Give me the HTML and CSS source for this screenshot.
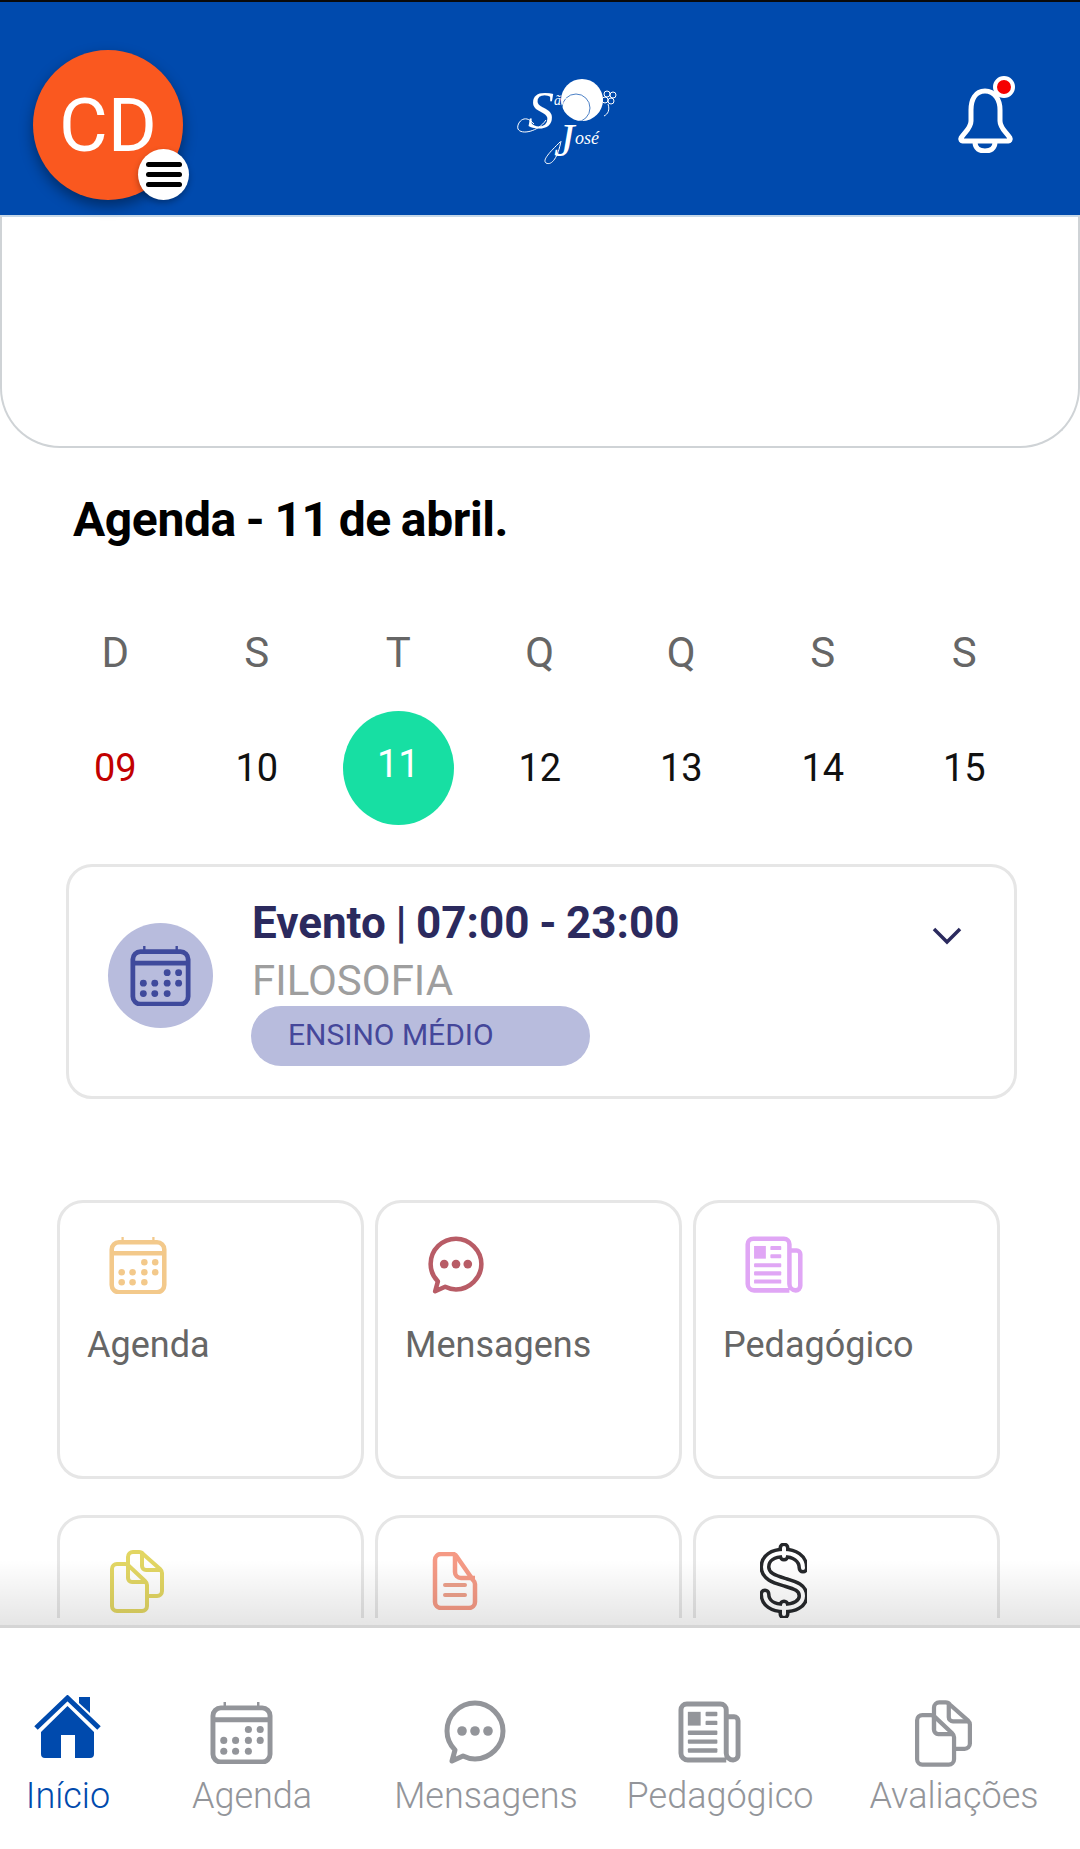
FILE: index.html
```html
<!DOCTYPE html>
<html lang="pt-BR">
<head>
    <meta charset="UTF-8">
    <meta name="viewport" content="width=device-width, initial-scale=1.0">
    <title>Início</title>
    <link rel="stylesheet" href="styles.css">
</head>
<body>

    <svg class="icon-defs" width="0" height="0" aria-hidden="true">
        <symbol id="i-calendar" viewBox="0 0 64 64">
            <path d="M15 1v7M49 1v7" fill="none" stroke="currentColor" stroke-width="2.5"/>
            <rect x="3" y="7" width="58" height="55" rx="8" fill="none" stroke="currentColor" stroke-width="5"/>
            <path d="M3 19h58" stroke="currentColor" stroke-width="5"/>
            <g fill="currentColor">
                <circle cx="39" cy="29" r="3.6"/><circle cx="51" cy="29" r="3.6"/>
                <circle cx="14" cy="40" r="3.6"/><circle cx="26" cy="40" r="3.6"/><circle cx="39" cy="40" r="3.6"/><circle cx="51" cy="40" r="3.6"/>
                <circle cx="14" cy="51" r="3.6"/><circle cx="26" cy="51" r="3.6"/><circle cx="39" cy="51" r="3.6"/>
            </g>
        </symbol>
        <symbol id="i-chat" viewBox="0 0 64 64">
            <path d="M32 3C17 3 4 15 4 31c0 8 3 14 8 19l-3 11 11-5c4 2 8 3 12 3 15 0 28-13 28-28S47 3 32 3z" fill="none" stroke="currentColor" stroke-width="5" stroke-linejoin="round"/>
            <g fill="currentColor"><circle cx="19" cy="31" r="4.8"/><circle cx="32" cy="31" r="4.8"/><circle cx="45" cy="31" r="4.8"/></g>
        </symbol>
        <symbol id="i-news" viewBox="0 0 64 64">
            <path d="M49 60H10a7 7 0 0 1-7-7V9a6 6 0 0 1 6-6h34a6 6 0 0 1 6 6v44a7 7 0 0 0 7 7 5 5 0 0 0 5-5V20a4 4 0 0 0-4-4h-8" fill="none" stroke="currentColor" stroke-width="5"/>
            <g fill="currentColor">
                <rect x="10" y="11" width="13" height="14"/>
                <rect x="28" y="11" width="12" height="4.5" rx="1"/><rect x="28" y="20" width="12" height="4.5" rx="1"/>
                <rect x="10" y="30" width="30" height="4.5" rx="1"/><rect x="10" y="39" width="30" height="4.5" rx="1"/><rect x="10" y="48" width="30" height="4.5" rx="1"/>
            </g>
        </symbol>
        <symbol id="i-docs" viewBox="0 0 54 63">
            <g fill="none" stroke="currentColor" stroke-width="4" stroke-linejoin="round">
                <path d="M18 28V7a5 5 0 0 1 5-5h6c2 0 3 .5 4 2l17 15c1 1 2 2 2 4v18a5 5 0 0 1-5 5h-9"/>
                <path d="M32 3v13a4 4 0 0 0 4 4h15"/>
                <path d="M2 19a5 5 0 0 1 5-5h8c2 0 3 .5 4 2l16 15c1 1 2 2 2 4v21a5 5 0 0 1-5 5H7a5 5 0 0 1-5-5z"/>
                <path d="M18 15v13a4 4 0 0 0 4 4h14"/>
            </g>
        </symbol>
        <symbol id="i-doc" viewBox="0 0 46 58">
            <g fill="none" stroke="currentColor" stroke-width="4.5" stroke-linejoin="round">
                <path d="M3 8a6 6 0 0 1 6-6h12c2 0 3 1 4 3l16 23c1 1 2 2 2 4v18a6 6 0 0 1-6 6H9a6 6 0 0 1-6-6z"/>
                <path d="M23 3v17a6 6 0 0 0 6 6h14"/>
            </g>
            <path d="M13 33h20M13 43h20" stroke="#eda08b" stroke-width="4" stroke-linecap="round"/>
        </symbol>
    </svg>

    <div class="page">
        <header class="topbar">
            <div class="avatar">
                CD
                <span class="menu-badge"><i></i><i></i><i></i></span>
            </div>
            <svg class="logo" viewBox="0 0 180 130" width="180" height="130">
                <circle cx="102" cy="50" r="21" fill="#fff"/>
                <circle cx="96" cy="58" r="14" fill="none" stroke="#004aad" stroke-width="0.7"/>
                <path d="M54 74C44 62 36 74 38 79c3 6 20 3 28-9M80 92c-10 10-18 18-14 21 6 3 12-6 15-22" fill="none" stroke="#fff" stroke-width="1"/>
                <text class="logo-big" x="48" y="78">S</text>
                <text class="logo-ao" x="74" y="55">ão</text>
                <text class="logo-big logo-j" x="74" y="106">J</text>
                <text class="logo-ose" x="95" y="94">osé</text>
                <g fill="none" stroke="#fff" stroke-width="1">
                    <circle cx="127" cy="44" r="3"/><circle cx="133" cy="45" r="3"/><circle cx="125" cy="50" r="3"/><circle cx="131" cy="51" r="3"/>
                    <path d="M128 54c2 6 0 10-4 12"/>
                </g>
            </svg>
            <div class="bell">
                <svg viewBox="0 0 57 65" width="57" height="65">
                    <path d="M28 3C18 3 14 12 14 22V33C14 40 8 44 4 50a2 2 0 0 0 2 3H51a2 2 0 0 0 2-3C49 44 43 40 43 33V22C43 12 38 3 28 3z" fill="none" stroke="#fff" stroke-width="5"/>
                    <path d="M18 54c0 7 5 9 10 9s10-2 10-9" fill="none" stroke="#fff" stroke-width="5"/>
                </svg>
                <span class="bell-dot"></span>
            </div>
        </header>

        <main class="content">
            <div class="notice"></div>

            <h1 class="agenda-title">Agenda - 11 de abril.</h1>

            <div class="week">
                <span class="week-day">D</span>
                <span class="week-day">S</span>
                <span class="week-day">T</span>
                <span class="week-day">Q</span>
                <span class="week-day">Q</span>
                <span class="week-day">S</span>
                <span class="week-day">S</span>
                <span class="week-num sunday">09</span>
                <span class="week-num">10</span>
                <span class="week-num today"><b>11</b></span>
                <span class="week-num">12</span>
                <span class="week-num">13</span>
                <span class="week-num">14</span>
                <span class="week-num">15</span>
            </div>

            <div class="event-card">
                <div class="event-icon">
                    <svg width="61" height="61"><use href="#i-calendar"/></svg>
                </div>
                <div class="event-info">
                    <div class="event-title">Evento | 07:00 - 23:00</div>
                    <div class="event-subject">FILOSOFIA</div>
                    <div class="event-tag">ENSINO MÉDIO</div>
                </div>
                <svg class="event-chevron" viewBox="0 0 30 18" width="30" height="18">
                    <path d="M2 2l13 13L28 2" fill="none" stroke="#2b2a5e" stroke-width="3.5"/>
                </svg>
            </div>

            <div class="tiles">
                <a class="tile">
                    <svg class="tile-icon c-agenda" width="58" height="58"><use href="#i-calendar"/></svg>
                    <span class="tile-label">Agenda</span>
                </a>
                <a class="tile">
                    <svg class="tile-icon c-msg" width="58" height="58"><use href="#i-chat"/></svg>
                    <span class="tile-label">Mensagens</span>
                </a>
                <a class="tile">
                    <svg class="tile-icon c-ped" width="58" height="58"><use href="#i-news"/></svg>
                    <span class="tile-label">Pedagógico</span>
                </a>
                <a class="tile">
                    <svg class="tile-icon c-docs" width="54" height="63"><use href="#i-docs"/></svg>
                </a>
                <a class="tile">
                    <svg class="tile-icon c-doc" width="46" height="58"><use href="#i-doc"/></svg>
                </a>
                <a class="tile">
                    <svg class="tile-icon c-money" viewBox="0 0 47 75" width="47" height="75">
                        <g fill="none" stroke="#26282b" stroke-linecap="round">
                            <path d="M24 5v8M24 62v9" stroke-width="11"/>
                            <path d="M43 25C43 15 34 10 24 10 13 10 5 15 5 24c0 9 9 12 19 15 10 3 19 5 19 14 0 8-9 12-19 12-11 0-19-5-19-14" stroke-width="11"/>
                        </g>
                        <g fill="none" stroke="#fff" stroke-linecap="round">
                            <path d="M24 5v8M24 62v9" stroke-width="4"/>
                            <path d="M43 25C43 15 34 10 24 10 13 10 5 15 5 24c0 9 9 12 19 15 10 3 19 5 19 14 0 8-9 12-19 12-11 0-19-5-19-14" stroke-width="4"/>
                        </g>
                    </svg>
                </a>
            </div>
            <div class="fade"></div>
        </main>

        <nav class="tabbar">
            <a class="tab active">
                <svg class="tab-home" viewBox="0 0 67 63" width="67" height="63">
                    <path d="M2 33L33.5 3 65 33" fill="none" stroke="currentColor" stroke-width="5" stroke-linejoin="miter"/>
                    <path d="M45 2h11v16l-11-10z" fill="currentColor"/>
                    <path d="M33.5 11L60 37v22a4 4 0 0 1-4 4H41V40H27v23H11a4 4 0 0 1-4-4V37z" fill="currentColor"/>
                </svg>
                <span>Início</span>
            </a>
            <a class="tab">
                <svg class="tab-icon" width="63" height="63"><use href="#i-calendar"/></svg>
                <span>Agenda</span>
            </a>
            <a class="tab">
                <svg class="tab-icon" width="64" height="64"><use href="#i-chat"/></svg>
                <span>Mensagens</span>
            </a>
            <a class="tab">
                <svg class="tab-icon" width="63" height="63"><use href="#i-news"/></svg>
                <span>Pedagógico</span>
            </a>
            <a class="tab">
                <svg class="tab-icon tab-docs" width="57" height="67"><use href="#i-docs"/></svg>
                <span>Avaliações</span>
            </a>
        </nav>
    </div>

</body>
</html>
```

FILE: styles.css
```css
body {
    font-family: Roboto, "Liberation Sans", sans-serif;
    background-color: #ffffff;
    margin: 0;
    padding: 0;
}
.icon-defs {
    position: absolute;
}
.page {
    height: 1849px;
    display: flex;
    flex-direction: column;
    overflow: hidden;
}
.topbar {
    flex: none;
    height: 213px;
    display: flex;
    align-items: flex-start;
    padding-left: 33px;
    padding-right: 66px;
    background-color: #004aad;
    border-top: 2px solid #0a0a0a;
}
.avatar {
    position: relative;
    flex: none;
    width: 150px;
    height: 150px;
    margin-top: 48px;
    display: flex;
    align-items: center;
    justify-content: center;
    border-radius: 50%;
    background-color: #fa581f;
    color: #ffffff;
    font-size: 75px;
    line-height: 152px;
    box-shadow: 0 6px 14px rgba(0,0,0,0.4);
}
.menu-badge {
    position: absolute;
    right: -6px;
    bottom: 0;
    width: 51px;
    height: 51px;
    display: flex;
    flex-direction: column;
    align-items: center;
    justify-content: center;
    gap: 5px;
    border-radius: 50%;
    background-color: #ffffff;
    box-shadow: 0 3px 6px rgba(0,0,0,0.3);
}
.menu-badge i {
    width: 36px;
    height: 5px;
    border-radius: 3px;
    background-color: #000000;
}
.logo {
    flex: none;
    margin-top: 48px;
    margin-left: 297px;
}
.logo-big {
    font-family: "Liberation Serif", serif;
    font-style: italic;
    font-size: 52px;
    fill: #ffffff;
}
.logo-j {
    font-size: 46px;
}
.logo-ao {
    font-family: "Liberation Serif", serif;
    font-style: italic;
    font-size: 14px;
    fill: #ffffff;
}
.logo-ose {
    font-family: "Liberation Serif", serif;
    font-style: italic;
    font-size: 18px;
    fill: #ffffff;
}
.bell {
    position: relative;
    flex: none;
    width: 57px;
    height: 65px;
    margin-top: 86px;
    margin-left: auto;
}
.bell-dot {
    position: absolute;
    top: -12px;
    right: -1px;
    width: 14px;
    height: 14px;
    border: 4px solid #ffffff;
    border-radius: 50%;
    background-color: #f50000;
}
.content {
    position: relative;
    flex: 1;
    min-height: 0;
    display: flex;
    flex-direction: column;
    padding-bottom: 7px;
}
.notice {
    flex: none;
    height: 233px;
    box-sizing: border-box;
    border: 2px solid #cfd3d6;
    border-top-color: #c6d8e8;
    border-bottom-left-radius: 60px;
    border-bottom-right-radius: 60px;
}
.agenda-title {
    flex: none;
    margin: 45px 0 0 73px;
    font-size: 48px;
    line-height: 54px;
    font-weight: 700;
    letter-spacing: -0.4px;
    word-spacing: -1.5px;
    color: #000000;
}
.week {
    flex: none;
    display: grid;
    grid-template-columns: repeat(7, 141.5px);
    grid-template-rows: 60px 116px;
    margin-top: 75px;
    margin-left: 44.5px;
    row-gap: 28px;
    justify-items: center;
    align-items: center;
}
.week-day {
    font-size: 42px;
    color: #666666;
}
.week-num {
    font-size: 38px;
    color: #111111;
}
.week-num.sunday {
    color: #c20000;
}
.week-num.today {
    width: 111px;
    height: 114px;
    display: flex;
    align-items: center;
    justify-content: center;
    border-radius: 50%;
    background-color: #17dfa3;
    color: #ffffff;
}
.week-num.today b {
    font-weight: 400;
    margin-bottom: 8px;
}
.event-card {
    flex: none;
    position: relative;
    box-sizing: border-box;
    width: 951px;
    height: 235px;
    margin-top: 38px;
    margin-left: 66px;
    display: flex;
    align-items: flex-start;
    border: 3px solid #e6e6e6;
    border-radius: 26px;
}
.event-icon {
    flex: none;
    width: 105px;
    height: 105px;
    margin-top: 56px;
    margin-left: 39px;
    display: flex;
    align-items: center;
    justify-content: center;
    border-radius: 50%;
    background-color: #b8bcdd;
    color: #3f4a9c;
}
.event-info {
    margin-left: 38px;
    margin-top: 30px;
}
.event-title {
    font-size: 44px;
    line-height: 52px;
    font-weight: 700;
    word-spacing: -1.3px;
    color: #2b2a5e;
    margin-left: 1px;
}
.event-subject {
    font-size: 42px;
    line-height: 50px;
    margin-left: 1px;
    margin-top: 7px;
    color: #9e9e9e;
}
.event-tag {
    box-sizing: border-box;
    width: 339px;
    height: 60px;
    padding-left: 37px;
    border-radius: 30px;
    background-color: #b8bcdd;
    color: #45479a;
    font-size: 30px;
    line-height: 58px;
}
.event-chevron {
    position: absolute;
    top: 60px;
    right: 52px;
}
.tiles {
    flex: 1;
    min-height: 0;
    overflow: hidden;
    display: grid;
    grid-template-columns: repeat(3, 307px);
    grid-auto-rows: 279px;
    column-gap: 11px;
    row-gap: 36px;
    margin-top: 101px;
    margin-left: 57px;
}
.tile {
    box-sizing: border-box;
    display: block;
    border: 3px solid #e6e6e6;
    border-radius: 26px;
}
.tile-icon {
    display: block;
    margin-top: 33px;
    margin-left: 49px;
}
.tile-label {
    display: block;
    margin-top: 30px;
    margin-left: 27px;
    font-size: 36px;
    line-height: 42px;
    color: #666666;
}
.c-agenda { color: #f3c98b; }
.c-msg { color: #b85c66; }
.c-ped { color: #e0a6f5; }
.c-docs { color: #e2d663; margin-top: 32px; margin-left: 50px; }
.c-doc { color: #f59a85; margin-top: 34px; margin-left: 54px; }
.c-money { margin-top: 25px; margin-left: 64px; }
.fade {
    position: absolute;
    left: 0;
    right: 0;
    bottom: 0;
    height: 65px;
    background: linear-gradient(rgba(0,0,0,0), rgba(0,0,0,0.1));
}
.tabbar {
    flex: none;
    height: 221px;
    display: grid;
    grid-template-columns: 136px 232px 236px 232px 236px;
    border-top: 3px solid #d5d5d5;
    background-color: #ffffff;
}
.tab {
    display: grid;
    grid-template-rows: 136px auto;
    justify-items: center;
    color: #93959a;
    font-size: 36px;
    font-weight: 300;
    white-space: nowrap;
}
.tab.active {
    color: #004aad;
}
.tab-home {
    align-self: end;
    margin-right: 2px;
    margin-bottom: 6px;
}
.tab-icon {
    align-self: end;
    margin-right: 22px;
}
.tab-docs {
    margin-bottom: -3px;
}
.tab span {
    margin-top: 10px;
    line-height: 44px;
}
```
